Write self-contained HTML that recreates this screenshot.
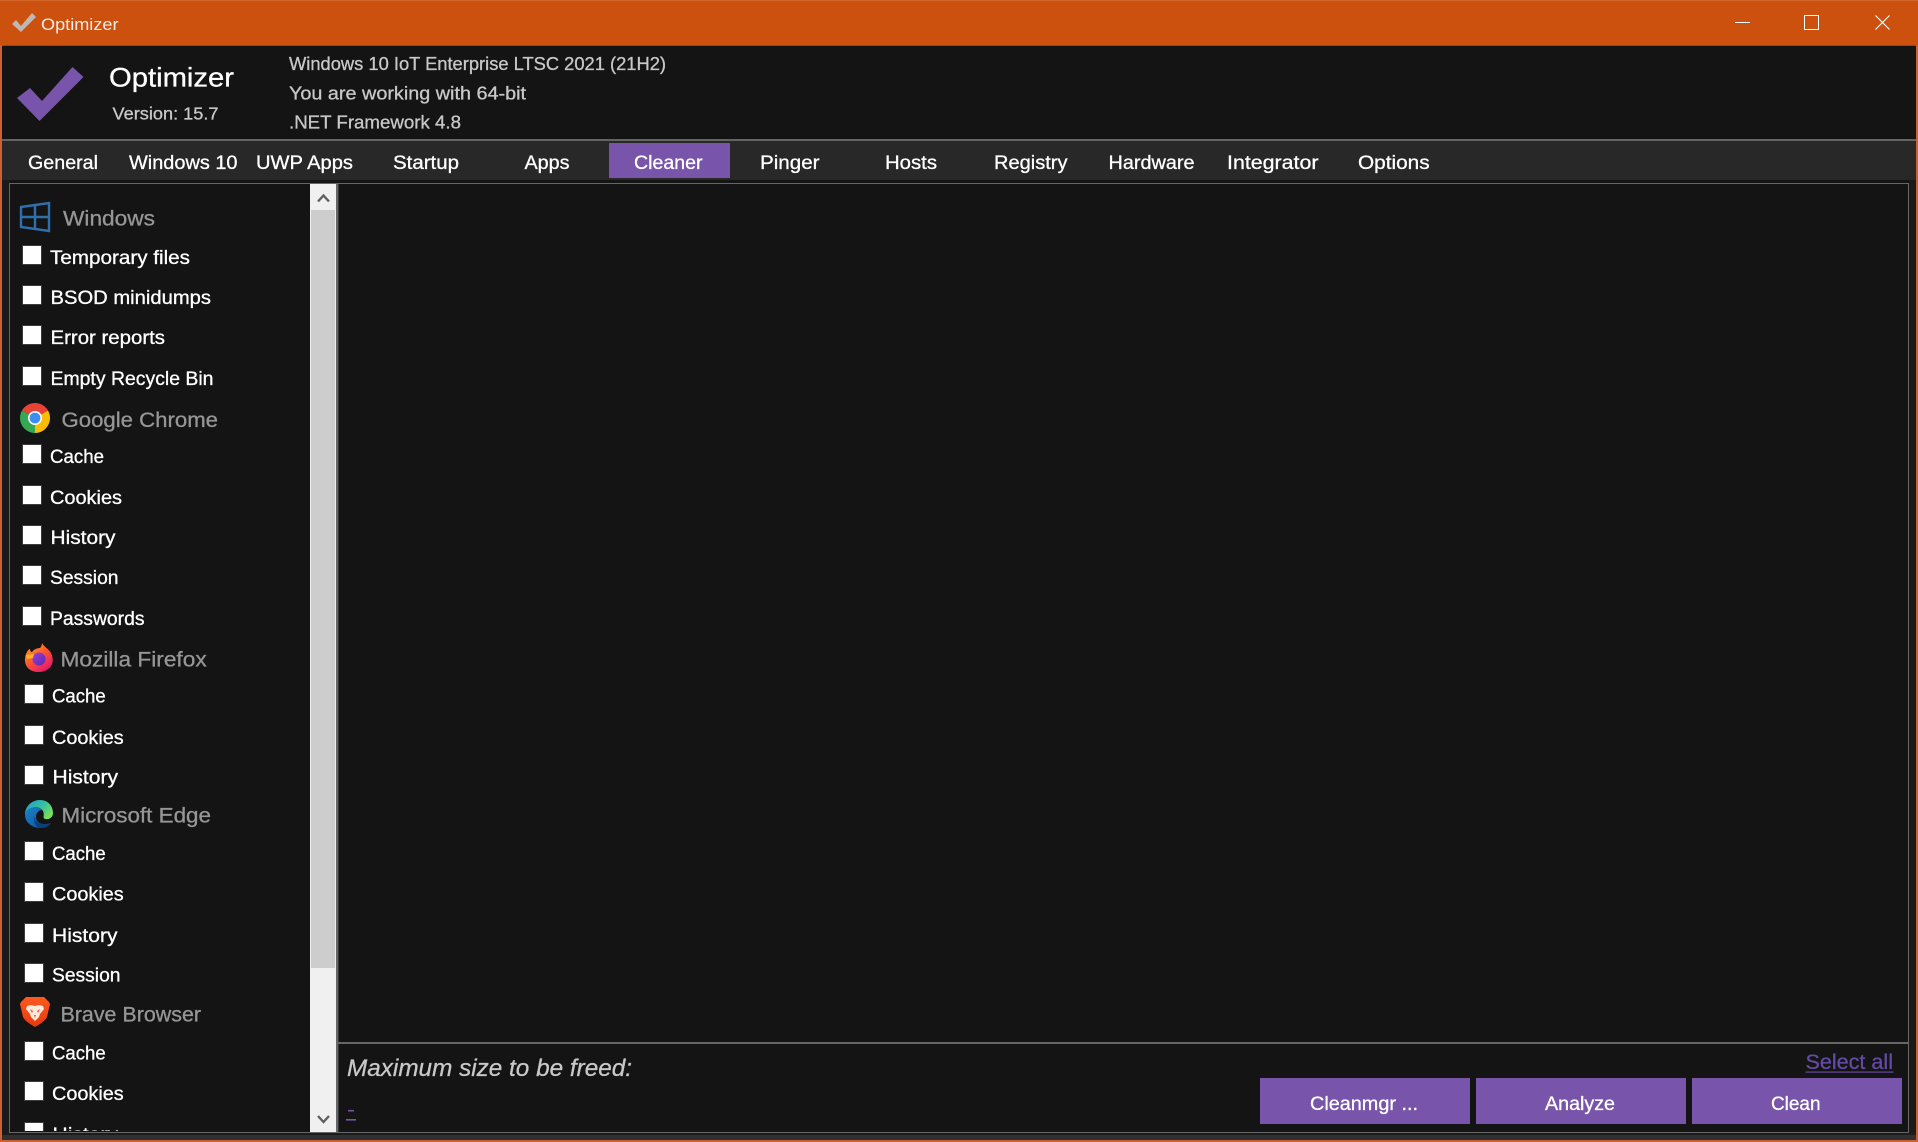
<!DOCTYPE html>
<html lang="en"><head><meta charset="utf-8"><title>Optimizer</title>
<style>
html,body{margin:0;padding:0;background:#141414;width:1918px;height:1142px;overflow:hidden}
svg{display:block;position:absolute;left:0;top:0}
text{font-family:"Liberation Sans",sans-serif;white-space:pre;stroke-width:.3px}
.tab{font-size:19.5px;fill:#fff;stroke:#fff}
.it{font-size:19px;fill:#fff;stroke:#fff}
.hd{font-size:21.5px;fill:#969696;stroke:#969696}
.inf{font-size:18.5px;fill:#c8c8c8;stroke:#c8c8c8}
.btn{font-size:19.5px;fill:#fff;stroke:#fff}
.cb{fill:#fff;stroke:#3c3c3c;stroke-width:1}
</style></head><body>
<svg width="1918" height="1142" viewBox="0 0 1918 1142" xmlns="http://www.w3.org/2000/svg">
<defs>
<linearGradient id="ff" x1="0" y1="0" x2="0.7" y2="1"><stop offset="0" stop-color="#ffb31f"/><stop offset=".5" stop-color="#ff5a2c"/><stop offset="1" stop-color="#e8186e"/></linearGradient>
<linearGradient id="ffp" x1="0" y1="0" x2="1" y2="1"><stop offset="0" stop-color="#9a3fe0"/><stop offset="1" stop-color="#5b2aa8"/></linearGradient>
<linearGradient id="eg" x1="0" y1="0" x2="1" y2=".6"><stop offset="0" stop-color="#1a9fc9"/><stop offset=".6" stop-color="#35c1a0"/><stop offset="1" stop-color="#7ce05a"/></linearGradient>
<linearGradient id="eb" x1="0" y1="0" x2="1" y2="1"><stop offset="0" stop-color="#1d80c8"/><stop offset="1" stop-color="#0c4f98"/></linearGradient>
<linearGradient id="br" x1="0" y1="0" x2="0" y2="1"><stop offset="0" stop-color="#ff5a1f"/><stop offset="1" stop-color="#e8380c"/></linearGradient>
<clipPath id="lst"><rect x="10" y="184" width="300" height="947"/></clipPath>
</defs>

<!-- window -->
<rect width="1918" height="1142" fill="#cc6030"/>
<rect x="2" y="45" width="1914" height="1095" fill="#141414"/>
<rect x="0" y="0" width="1918" height="45" fill="#cc510e"/>
<rect x="0" y="0" width="1918" height="1" fill="#d4652a"/>
<rect x="2" y="45" width="1914" height="1" fill="#5a5a5a"/>

<!-- title bar -->
<polygon points="12,24 16,20 21,26 32,13 36,17 21,32" fill="#bdb8b4"/>
<text x="41" y="30" font-size="17" fill="#f6ebe4" textLength="77.5" lengthAdjust="spacingAndGlyphs">Optimizer</text>
<rect x="1735" y="22" width="15" height="1" fill="#fff"/>
<rect x="1804.5" y="15.5" width="14" height="14" fill="none" stroke="#fff" stroke-width="1"/>
<path d="M1875.5 15.5 L1889.5 29.5 M1889.5 15.5 L1875.5 29.5" stroke="#fff" stroke-width="1.1" fill="none"/>

<!-- header -->
<polygon points="17,98 30,88 42,101 72.5,67 83.5,77 39.5,121" fill="#7855ab"/>
<text x="109" y="86.5" font-size="27" fill="#fff" stroke="#fff" textLength="125" lengthAdjust="spacingAndGlyphs">Optimizer</text>
<text x="112.5" y="119.5" font-size="17.5" fill="#c8c8c8" stroke="#c8c8c8" textLength="106" lengthAdjust="spacingAndGlyphs">Version: 15.7</text>
<text class="inf" x="289" y="70" textLength="377" lengthAdjust="spacingAndGlyphs">Windows 10 IoT Enterprise LTSC 2021 (21H2)</text>
<text class="inf" x="289" y="99.5" textLength="237" lengthAdjust="spacingAndGlyphs">You are working with 64-bit</text>
<text class="inf" x="289" y="128.5" textLength="172" lengthAdjust="spacingAndGlyphs">.NET Framework 4.8</text>

<!-- tab bar -->
<rect x="2" y="139" width="1914" height="2" fill="#646464"/>
<rect x="2" y="141" width="1914" height="39" fill="#282828"/>
<rect x="609" y="143" width="121" height="35" fill="#7855ab"/>
<text class="tab" x="28" y="169" textLength="70" lengthAdjust="spacingAndGlyphs">General</text>
<text class="tab" x="129" y="169" textLength="108.5" lengthAdjust="spacingAndGlyphs">Windows 10</text>
<text class="tab" x="256" y="169" textLength="97" lengthAdjust="spacingAndGlyphs">UWP Apps</text>
<text class="tab" x="393" y="169" textLength="66" lengthAdjust="spacingAndGlyphs">Startup</text>
<text class="tab" x="524.5" y="169" textLength="45" lengthAdjust="spacingAndGlyphs">Apps</text>
<text class="tab" x="634" y="169" textLength="68.5" lengthAdjust="spacingAndGlyphs">Cleaner</text>
<text class="tab" x="760" y="169" textLength="59.5" lengthAdjust="spacingAndGlyphs">Pinger</text>
<text class="tab" x="885" y="169" textLength="52" lengthAdjust="spacingAndGlyphs">Hosts</text>
<text class="tab" x="994" y="169" textLength="73.5" lengthAdjust="spacingAndGlyphs">Registry</text>
<text class="tab" x="1108.5" y="169" textLength="86" lengthAdjust="spacingAndGlyphs">Hardware</text>
<text class="tab" x="1227" y="169" textLength="91.5" lengthAdjust="spacingAndGlyphs">Integrator</text>
<text class="tab" x="1358" y="169" textLength="71.6" lengthAdjust="spacingAndGlyphs">Options</text>

<!-- tab panel frame -->
<rect x="2" y="180" width="8" height="955" fill="#1a1a1a"/>
<rect x="1909" y="180" width="7" height="955" fill="#1a1a1a"/>
<rect x="2" y="1133" width="1914" height="2" fill="#1c1c1c"/>
<rect x="2" y="1135" width="1914" height="5" fill="#303030"/>
<rect x="9" y="183" width="1900" height="950" fill="#141414"/>
<path d="M9.5 1132.5 V183.5 H1908.5 V1132.5 Z" fill="none" stroke="#666" stroke-width="1"/>

<!-- scrollbar -->
<rect x="310" y="184" width="26" height="948" fill="#f0f0f0"/>
<rect x="311" y="210" width="24" height="758" fill="#cdcdcd"/>
<path d="M318 201.5 L323.5 195.5 L329 201.5" fill="none" stroke="#606060" stroke-width="2.4"/>
<path d="M318 1116 L323.5 1122 L329 1116" fill="none" stroke="#606060" stroke-width="2.4"/>
<rect x="336" y="184" width="2.4" height="948" fill="#666"/>

<!-- divider -->
<rect x="338" y="1042" width="1570" height="2" fill="#666"/>

<!-- list -->
<g clip-path="url(#lst)">
<!-- windows icon -->
<g transform="translate(20,202)" fill="none" stroke="#2f6fae" stroke-width="2.4">
<path d="M1 5 L29 1 V29 L1 25 Z M15 3 V27 M1 15 H29"/>
</g>
<text class="hd" x="63" y="225.5" textLength="92" lengthAdjust="spacingAndGlyphs">Windows</text>

<rect class="cb" x="22.5" y="245.5" width="19" height="19"/>
<text class="it" x="50" y="264" textLength="140" lengthAdjust="spacingAndGlyphs">Temporary files</text>
<rect class="cb" x="22.5" y="285.5" width="19" height="19"/>
<text class="it" x="50.5" y="304" textLength="160.5" lengthAdjust="spacingAndGlyphs">BSOD minidumps</text>
<rect class="cb" x="22.5" y="325.5" width="19" height="19"/>
<text class="it" x="50.5" y="344" textLength="114.5" lengthAdjust="spacingAndGlyphs">Error reports</text>
<rect class="cb" x="22.5" y="366.5" width="19" height="19"/>
<text class="it" x="50.5" y="385" textLength="163" lengthAdjust="spacingAndGlyphs">Empty Recycle Bin</text>

<!-- chrome icon -->
<g transform="translate(35,418)">
<path d="M0 0 L-13 -7.5 A15 15 0 0 1 13 -7.5 Z" fill="#ea4335"/>
<path d="M0 0 L13 -7.5 A15 15 0 0 1 0 15 Z" fill="#fbbc05"/>
<path d="M0 0 L0 15 A15 15 0 0 1 -13 -7.5 Z" fill="#34a853"/>
<circle r="7" fill="#fff"/><circle r="5.4" fill="#3b8ef0"/>
</g>
<text class="hd" x="61.5" y="427" textLength="156.5" lengthAdjust="spacingAndGlyphs">Google Chrome</text>

<rect class="cb" x="22.5" y="444.5" width="19" height="19"/>
<text class="it" x="50" y="463" textLength="54" lengthAdjust="spacingAndGlyphs">Cache</text>
<rect class="cb" x="22.5" y="485.5" width="19" height="19"/>
<text class="it" x="50" y="504" textLength="72" lengthAdjust="spacingAndGlyphs">Cookies</text>
<rect class="cb" x="22.5" y="525.5" width="19" height="19"/>
<text class="it" x="50.5" y="544" textLength="65" lengthAdjust="spacingAndGlyphs">History</text>
<rect class="cb" x="22.5" y="565.5" width="19" height="19"/>
<text class="it" x="50" y="584" textLength="68.5" lengthAdjust="spacingAndGlyphs">Session</text>
<rect class="cb" x="22.5" y="606.5" width="19" height="19"/>
<text class="it" x="50" y="625" textLength="94.5" lengthAdjust="spacingAndGlyphs">Passwords</text>

<!-- firefox icon -->
<g transform="translate(39,658)">
<path d="M3 -15 C5 -11 10 -9 12 -5 C15 1 14 8 9 11 C4 15 -5 15 -10 11 C-15 7 -15 -1 -12 -6 C-11 -8 -10 -9 -9 -9 C-9 -7 -8 -6 -7 -6 C-5 -9 -1 -10 1 -10 C2 -11 3 -13 3 -15 Z" fill="url(#ff)"/>
<circle cx="0" cy="1" r="6.5" fill="url(#ffp)"/>
<path d="M-13 -3 L-5 -4 L-6 0 L-12 1 Z" fill="#ffb52a"/>
</g>
<text class="hd" x="60.5" y="666.7" textLength="146.2" lengthAdjust="spacingAndGlyphs">Mozilla Firefox</text>

<rect class="cb" x="24.5" y="684.5" width="19" height="19"/>
<text class="it" x="52" y="702.7" textLength="53.7" lengthAdjust="spacingAndGlyphs">Cache</text>
<rect class="cb" x="24.5" y="725.5" width="19" height="19"/>
<text class="it" x="52" y="744" textLength="71.7" lengthAdjust="spacingAndGlyphs">Cookies</text>
<rect class="cb" x="24.5" y="765.5" width="19" height="19"/>
<text class="it" x="52.5" y="783.5" textLength="65.5" lengthAdjust="spacingAndGlyphs">History</text>

<!-- edge icon -->
<g transform="translate(39,814)">
<path d="M-14 1 C-14 -9 -6 -14 1 -14 C9 -14 14 -8 14 -1 C14 4 9 6 6 5 C3 4 6 1 4 -3 C1 -8 -7 -8 -11 -3 Z" fill="url(#eg)"/>
<path d="M-14 1 C-14 9 -6 14 1 14 C6 14 10 12 12 9 C7 11 -3 11 -3 3 C-3 -1 0 -4 3 -4 C-2 -9 -13 -7 -14 1 Z" fill="url(#eb)"/>
<path d="M-4 2 C-5 9 3 12 12 9 C8 13 3 14 0 14 C-4 12 -6 7 -4 2 Z" fill="#0a3f7e"/>
</g>
<text class="hd" x="61.5" y="822.5" textLength="149.5" lengthAdjust="spacingAndGlyphs">Microsoft Edge</text>

<rect class="cb" x="24.5" y="841.5" width="19" height="19"/>
<text class="it" x="52" y="860" textLength="53.7" lengthAdjust="spacingAndGlyphs">Cache</text>
<rect class="cb" x="24.5" y="882.5" width="19" height="19"/>
<text class="it" x="52" y="900.5" textLength="71.7" lengthAdjust="spacingAndGlyphs">Cookies</text>
<rect class="cb" x="24.5" y="923.5" width="19" height="19"/>
<text class="it" x="52" y="942" textLength="65.5" lengthAdjust="spacingAndGlyphs">History</text>
<rect class="cb" x="24.5" y="963.5" width="19" height="19"/>
<text class="it" x="52" y="981.7" textLength="68.5" lengthAdjust="spacingAndGlyphs">Session</text>

<!-- brave icon -->
<g transform="translate(35,1012)">
<path d="M-9 -15 H9 L14 -10 L15 -8 L12 5 C10 9 5 12 0 15 C-5 12 -10 9 -12 5 L-15 -8 L-14 -10 Z" fill="url(#br)"/>
<path d="M-8 -6 L-4 -7 L0 -6 L4 -7 L8 -6 L9 -3 L5 2 L4 5 L0 9 L-4 5 L-5 2 L-9 -3 Z" fill="#ffe9dc"/>
<path d="M-5 -3 L-2 -1 L-3 1 Z M5 -3 L2 -1 L3 1 Z M-1 3 L1 3 L0 6 Z" fill="#f0531c"/>
</g>
<text class="hd" x="60.5" y="1021.7" textLength="140.5" lengthAdjust="spacingAndGlyphs">Brave Browser</text>

<rect class="cb" x="24.5" y="1041.5" width="19" height="19"/>
<text class="it" x="52" y="1059.5" textLength="53.7" lengthAdjust="spacingAndGlyphs">Cache</text>
<rect class="cb" x="24.5" y="1081.5" width="19" height="19"/>
<text class="it" x="52" y="1100" textLength="71.7" lengthAdjust="spacingAndGlyphs">Cookies</text>
<rect class="cb" x="24.5" y="1122.5" width="19" height="19"/>
<text class="it" x="52.5" y="1141" textLength="65.5" lengthAdjust="spacingAndGlyphs">History</text>
</g>

<!-- bottom -->
<text x="347" y="1076" font-size="24" font-style="italic" fill="#c8c8c8" stroke="#c8c8c8" textLength="285" lengthAdjust="spacingAndGlyphs">Maximum size to be freed:</text>
<text x="347" y="1116" font-size="20" fill="#7855ab" textLength="8" lengthAdjust="spacingAndGlyphs">-</text>
<rect x="346" y="1119" width="10" height="1.6" fill="#7855ab"/>
<text x="1805.5" y="1069" font-size="21" fill="#6449a6" stroke="#6449a6" textLength="87.5" lengthAdjust="spacingAndGlyphs">Select all</text>
<rect x="1805.5" y="1071.5" width="88" height="1.2" fill="#6449a6"/>

<rect x="1260" y="1078" width="210" height="46" fill="#7855ab"/>
<rect x="1476" y="1078" width="210" height="46" fill="#7855ab"/>
<rect x="1692" y="1078" width="210" height="46" fill="#7855ab"/>
<text class="btn" x="1310" y="1110" textLength="108" lengthAdjust="spacingAndGlyphs">Cleanmgr ...</text>
<text class="btn" x="1545" y="1110" textLength="70" lengthAdjust="spacingAndGlyphs">Analyze</text>
<text class="btn" x="1771" y="1110" textLength="49.5" lengthAdjust="spacingAndGlyphs">Clean</text>
</svg>
</body></html>
